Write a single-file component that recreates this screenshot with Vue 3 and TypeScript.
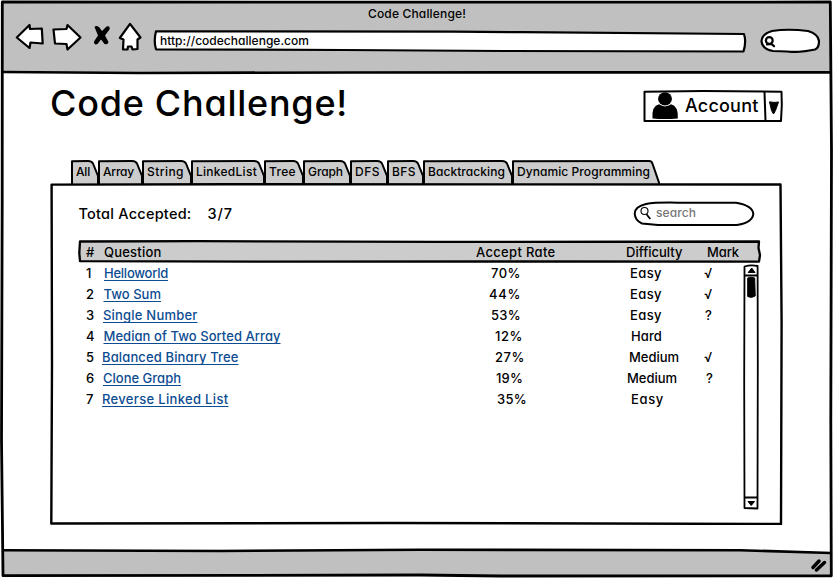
<script setup lang="ts">
import type { Directive } from 'vue'

interface Word {
  text: string
  x: number
  w: number
}

interface Tab {
  label: string
  width: number
  textWidth: number
}

interface Question {
  id: number
  name: Word
  rate: Word
  difficulty: Word
  mark: Word
}

/* Spreads the lettering of a label so that it fills the given width. */
const vFit: Directive<HTMLElement, number> = {
  mounted(el, { value }) {
    const count = (el.textContent ?? '').trim().length
    if (!value || count < 2) return
    const natural = el.getBoundingClientRect().width
    el.style.letterSpacing = `${(value - natural) / count}px`
  },
}

const word = (text: string, x = 0, w = 0): Word => ({ text, x, w })

const tabs: Tab[] = [
  { label: 'All', width: 27, textWidth: 14 },
  { label: 'Array', width: 44, textWidth: 31 },
  { label: 'String', width: 49, textWidth: 37 },
  { label: 'LinkedList', width: 73, textWidth: 61 },
  { label: 'Tree', width: 39, textWidth: 27 },
  { label: 'Graph', width: 47, textWidth: 35 },
  { label: 'DFS', width: 37, textWidth: 25 },
  { label: 'BFS', width: 36, textWidth: 24 },
  { label: 'Backtracking', width: 89, textWidth: 77 },
  { label: 'Dynamic Programming', width: 148, textWidth: 133 },
]

const tabPath = (w: number, last: boolean): string =>
  last
    ? `M1 24V1.2L${w - 11} 1Q${w - 8} 1 ${w - 7.4} 4L${w - 0.5} 24`
    : `M1 24V1.2L${w - 10} 1Q${w - 6} 1 ${w - 4.8} 4L${w} 16V24`

const questions: Question[] = [
  { id: 1, name: word('Helloworld', 3, 64), rate: word('70%', 3, 30), difficulty: word('Easy', 4, 32), mark: word('√') },
  { id: 2, name: word('Two Sum', 2.5, 57.5), rate: word('44%', 1, 32), difficulty: word('Easy', 4, 32), mark: word('√') },
  { id: 3, name: word('Single Number', 2, 94.5), rate: word('53%', 3, 30), difficulty: word('Easy', 4, 32), mark: word('?', 1) },
  { id: 4, name: word('Median of Two Sorted Array', 2.5, 177), rate: word('12%', 7, 28), difficulty: word('Hard', 5, 31), mark: word('') },
  { id: 5, name: word('Balanced Binary Tree', 1, 136.5), rate: word('27%', 7, 30), difficulty: word('Medium', 3, 50), mark: word('√') },
  { id: 6, name: word('Clone Graph', 2, 78), rate: word('19%', 8, 27), difficulty: word('Medium', 1, 50), mark: word('?', 2) },
  { id: 7, name: word('Reverse Linked List', 1, 126.5), rate: word('35%', 9, 30), difficulty: word('Easy', 5, 33), mark: word('') },
]
</script>

<template>
  <div class="window">
    <svg class="frame" viewBox="0 0 833 578" fill="none" stroke="#000" stroke-linejoin="round">
      <path d="M3 2L830 2L831 72L3 72Z" fill="#c0c0c0" stroke="none" />
      <path d="M3 550.5L400 549.5L760 550.5L831 553V576L3 575Z" fill="#c0c0c0" stroke="none" />
      <path d="M2.3 2L400 2.2L830.3 2L831.5 150L830.8 420L831.3 575.8L500 576L420 575L3 575.7L1.5 440L2.2 200Z" stroke-width="2.8" />
      <path d="M3 72L140 73L350 72.5L831 72.4" stroke-width="2.7" />
      <path d="M3 550.3L220 551L420 549.7L740 550.2L831 553" stroke-width="2.6" />
    </svg>

    <div class="chrome">
      <header class="toolbar">
        <div class="window-title"><span v-fit="98">Code Challenge!</span></div>
        <div class="controls">
          <svg class="nav" viewBox="0 0 128 32" fill="#fff" stroke="#000" stroke-width="2.2" stroke-linejoin="round">
            <path d="M1.8 15.500L14.500 3L15 7L26.800 6.500L27.700 21.500L15.500 20.500L14.500 26Z" />
            <path d="M38.500 7.500L51.500 7L52.500 3L65.500 15.500L52.500 27.500L51.500 22L40 21.500Z" />
            <path d="M79.500 5Q81 3 84 5L87 9L91.500 4.500Q95.500 3.500 94.500 7.500L90 13.500L93.500 20Q93 23 89.500 22L86 17.500L82.500 22Q79 23.500 79 19.500L83 13.500Z" fill="#000" stroke="none" />
            <path d="M115 1.800L125.500 15.500L122.500 17.500V27L117.500 27.500L116.500 24.500L113 24.500L112.500 27.500L108 27.500L108.500 17.500L104.800 16Z" />
          </svg>
          <div class="address sketched">
            <svg viewBox="0 0 594 24" fill="#fff" stroke="#000" stroke-width="2.2" stroke-linejoin="round">
              <path d="M3 2.300L300 2.600L370 3.200L591 5Q593.500 13 590.500 22.500L350 22L190 21L3 20.300Q.5 12 3 2.300Z" />
            </svg>
            <span v-fit="149">http://codechallenge.com</span>
          </div>
          <svg class="pill" viewBox="0 0 60 26" fill="#fff" stroke="#000" stroke-width="2.200" stroke-linejoin="round" stroke-linecap="round">
            <path d="M12 4Q28 1.500 48 4Q58 7 59 14Q59 21 55 22.500Q38 26 27 24.500L13 24Q2 22 1.500 14Q2 7 12 4Z" />
            <circle cx="9.300" cy="13.500" r="3.400" />
            <path d="M7 17.500L11.500 17L14 19.200" />
          </svg>
        </div>
      </header>

      <main class="page">
        <div class="page-head">
          <h1><span v-fit="298">Code Challenge!</span></h1>
          <div class="account sketched">
            <svg viewBox="0 0 140 33" fill="none" stroke="#000" stroke-width="2" stroke-linejoin="round">
              <path d="M1.500 1.700L60 1L138.500 1.700L138.800 15L138 31L1.500 31Z" />
              <path d="M121.500 2L122.500 31" />
              <path d="M126.500 11.800Q131 13 135.500 12L132.500 20.500L130.500 24L128.500 20.500Z" fill="#000" stroke-width="1" />
              <ellipse cx="22" cy="8.800" rx="7" ry="6.600" fill="#000" stroke="none" />
              <path d="M9.500 28.500Q8.500 16 16 14.300Q22 18.500 28 14.300Q35.500 16 34.800 28.500Q22 29.500 9.500 28.500Z" fill="#000" stroke="none" />
            </svg>
            <span v-fit="73.5">Account</span>
          </div>
        </div>

        <nav class="tabs">
          <div v-for="(tab, i) in tabs" :key="tab.label" class="tab sketched" :style="{ width: tab.width + 'px' }">
            <svg :viewBox="`0 0 ${tab.width} 24`" fill="#ccc" stroke="#000" stroke-width="2" stroke-linejoin="round">
              <path :d="tabPath(tab.width, i === tabs.length - 1)" />
            </svg>
            <span v-fit="tab.textWidth">{{ tab.label }}</span>
          </div>
        </nav>

        <section class="panel sketched">
          <svg viewBox="0 0 733 342" fill="none" stroke="#000" stroke-width="2.400" stroke-linejoin="round">
            <path d="M1.600 1.600L180 1.200L730.500 1.500L731.600 140L731 341L340 340L1.300 340.500L2 180Z" />
          </svg>
          <div class="panel-body">
            <div class="summary">
              <span class="total" v-fit="113">Total Accepted:</span>
              <span class="score" v-fit="25.5">3/7</span>
              <div class="search sketched">
                <svg viewBox="0 0 122 26" fill="none" stroke="#000" stroke-width="2" stroke-linejoin="round">
                  <path d="M13 3Q22 1.300 45 1.700L103 1.800Q119 4.500 120.300 12.500Q120 21.500 104 24H25L9 22.500Q2 19.500 1.700 12.500Q2 5.500 13 3Z" />
                  <circle cx="11.500" cy="10" r="3.500" stroke-width="1.100" />
                  <path d="M13.500 13.200L17.300 18" stroke-width="1.800" />
                </svg>
                <span v-fit="40">search</span>
              </div>
            </div>

            <div class="thead sketched">
              <svg viewBox="0 0 684 24" fill="#ccc" stroke="#000" stroke-width="2.300" stroke-linejoin="round">
                <path d="M2 1.500L120 1.200L360 1.900L681 1.500L680.500 8L682 15L681 21.700L440 21.500L180 21.700L2 21.200L1.300 13Z" />
              </svg>
              <div class="cells head">
                <span>#</span>
                <span><b v-fit="57.5">Question</b></span>
                <span><b v-fit="79.5">Accept Rate</b></span>
                <span><b v-fit="56.5">Difficulty</b></span>
                <span><b v-fit="32">Mark</b></span>
              </div>
            </div>

            <div class="tbody">
              <div class="rows">
                <div v-for="q in questions" :key="q.id" class="cells">
                  <span>{{ q.id }}</span>
                  <span :style="{ paddingLeft: q.name.x + 'px' }"><a v-fit="q.name.w">{{ q.name.text }}</a></span>
                  <span :style="{ paddingLeft: q.rate.x + 'px' }"><b v-fit="q.rate.w">{{ q.rate.text }}</b></span>
                  <span :style="{ paddingLeft: q.difficulty.x + 'px' }"><b v-fit="q.difficulty.w">{{ q.difficulty.text }}</b></span>
                  <span :style="{ paddingLeft: q.mark.x + 'px' }">{{ q.mark.text }}</span>
                </div>
              </div>
              <svg class="scrollbar" viewBox="0 0 17 246" fill="none" stroke="#000" stroke-width="1.800" stroke-linejoin="round">
                <path d="M1.500 2.500Q8 .5 14.600 2L14.800 100L14.500 244.500L1.500 244L1.200 120Z" />
                <path d="M1.500 11.500H15M1.500 233.500H14.500" />
                <path d="M8.700 4L12 8.500H5.200Z" fill="#000" stroke-width="1" />
                <path d="M5 237.500H11.500L8.200 241.500Z" fill="#000" stroke-width="1" />
                <path d="M4.700 14Q8 12.500 11.700 14L12.200 32Q8.700 34.500 4.700 32.500Z" fill="#000" stroke-width="1" />
              </svg>
            </div>
          </div>
        </section>
      </main>

      <footer class="statusbar">
        <svg viewBox="0 0 18 14" stroke="#000" stroke-width="3.400" stroke-linecap="round">
          <path d="M3 9.500L9 3M6.500 12L14.500 4.500" />
        </svg>
      </footer>
    </div>
  </div>
</template>

<style>
body {
  margin: 0;
  background: #fff;
}
</style>

<style scoped>
.window {
  display: grid;
  width: 833px;
  height: 578px;
  overflow: hidden;
  font-family: Inter, 'Noto Sans', sans-serif;
  font-feature-settings: 'cv11', 'ss03';
  font-size: 13px;
  font-weight: 500;
  color: #000;
}

.frame,
.chrome {
  grid-area: 1 / 1;
}

svg {
  display: block;
}

span,
a,
b {
  white-space: nowrap;
  font-weight: 500;
}

.chrome {
  display: flex;
  flex-direction: column;
}

.sketched {
  display: grid;
  grid-template-columns: 100%;
  grid-template-rows: 100%;
}

.sketched > * {
  grid-area: 1 / 1;
}

.sketched > span {
  justify-self: start;
}

.toolbar {
  height: 73px;
}

.window-title {
  height: 22px;
  padding: 4px 0 0 368px;
  box-sizing: border-box;
  font-size: 12px;
  line-height: 19px;
}

.controls {
  display: flex;
  padding-left: 15px;
}

.nav {
  width: 128px;
  height: 32px;
}

.address {
  width: 594px;
  height: 24px;
  margin: 7px 0 0 10px;
  font-size: 12px;
}

.address span {
  margin-left: 7px;
  line-height: 24px;
}

.pill {
  width: 60px;
  height: 26px;
  margin: 5px 0 0 13px;
}

.page {
  height: 477px;
}

.page-head {
  display: flex;
  justify-content: space-between;
  height: 87px;
  padding: 0 50px 0 50px;
}

h1 {
  margin: 7px 0 0;
  font-size: 36px;
  line-height: 47px;
  font-weight: 500;
}

.account {
  width: 140px;
  height: 33px;
  margin-top: 17px;
  font-size: 18px;
  line-height: 31px;
}

.account span {
  margin-left: 42px;
}

.tabs {
  display: flex;
  padding-left: 71px;
  height: 24px;
}

.tab {
  height: 24px;
  font-size: 12px;
  line-height: 23px;
}

.tab span {
  margin-left: 5px;
}

.panel {
  width: 733px;
  height: 342px;
  margin: -1px 0 0 50px;
}

.panel-body {
  padding: 18px 0 0 28px;
}

.summary {
  display: flex;
  height: 39px;
  font-size: 14.500px;
  line-height: 25px;
}

.summary > span {
  flex: none;
  align-self: flex-start;
}

.total {
  margin-left: 0.5px;
}

.score {
  margin-left: 16px;
}

.search {
  width: 122px;
  height: 26px;
  margin-left: auto;
  margin-right: 28px;
  font-size: 12px;
  line-height: 23px;
  color: #777;
}

.search span {
  margin-left: 23px;
}

.thead {
  width: 684px;
  height: 24px;
}

.cells {
  display: grid;
  grid-template-columns: 15px 387px 138px 78px auto;
  height: 21px;
  padding-left: 8px;
  line-height: 21px;
}

.head {
  height: 24px;
  line-height: 24px;
}

.head span:nth-child(2) {
  padding-left: 3px;
}

.head span:nth-child(3) {
  margin-left: -12px;
}

.head span:nth-child(5) {
  padding-left: 3px;
}

.tbody {
  display: flex;
  justify-content: space-between;
  width: 682px;
  margin-top: -1px;
}

a {
  color: #0c4c92;
  text-decoration: underline;
  text-decoration-thickness: 1px;
  text-underline-offset: 2px;
  text-decoration-skip-ink: none;
}

.scrollbar {
  width: 17px;
  height: 246px;
  margin-top: 1px;
}

.statusbar {
  display: flex;
  justify-content: flex-end;
  padding: 8px 5px 0 0;
}

.statusbar svg {
  width: 18px;
  height: 14px;
}
</style>
